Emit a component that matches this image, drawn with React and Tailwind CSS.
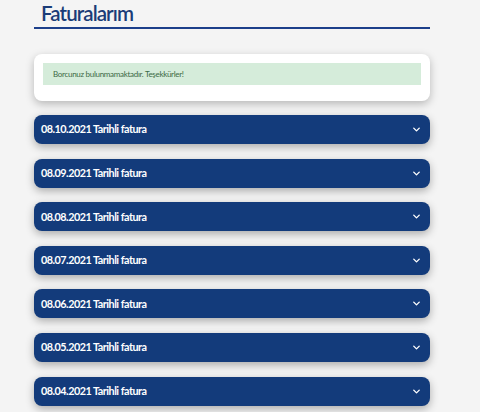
import { ChevronDown } from 'lucide-react'

const dates = ['08.10.2021', '08.09.2021', '08.08.2021', '08.07.2021', '08.06.2021', '08.05.2021', '08.04.2021']

export default function App() {
  return (
    <div className="min-h-[412px] bg-[#f4f4f4] font-['Lato','Open_Sans',sans-serif] overflow-hidden">
      <div className="w-[396px] ml-[34px]">
        <h1 className="pl-[7px] pt-[1px] h-[27px] text-[20.5px] leading-[24px] tracking-[-0.9px] font-semibold text-[#1a3c78]">Faturalarım</h1>
        <div className="h-[2px] bg-[#1c3f8a]" />
        <div className="mt-[25px] h-[47px] bg-white rounded-[8px] shadow-[0_3px_8px_rgba(0,0,0,0.25)] px-[9px] pt-[9px]">
          <div className="h-[22px] bg-[#d5ecda] flex items-center pl-[10px] text-[8px] tracking-[-0.3px] text-[#3c6a45]">
            Borcunuz bulunmamaktadır. Teşekkürler!
          </div>
        </div>
        <div className="mt-[14px] flex flex-col gap-[14.6px]">
          {dates.map((d) => (
            <div key={d} className="h-[29px] rounded-[8px] bg-[#133b7b] shadow-[0_3px_8px_rgba(0,0,0,0.3)] flex items-center justify-between pl-[7px] pr-[8px] text-white">
              <span className="text-[10.8px] font-bold tracking-[-0.5px]">{d} Tarihli fatura</span>
              <ChevronDown size={11} strokeWidth={3} />
            </div>
          ))}
        </div>
      </div>
    </div>
  )
}
